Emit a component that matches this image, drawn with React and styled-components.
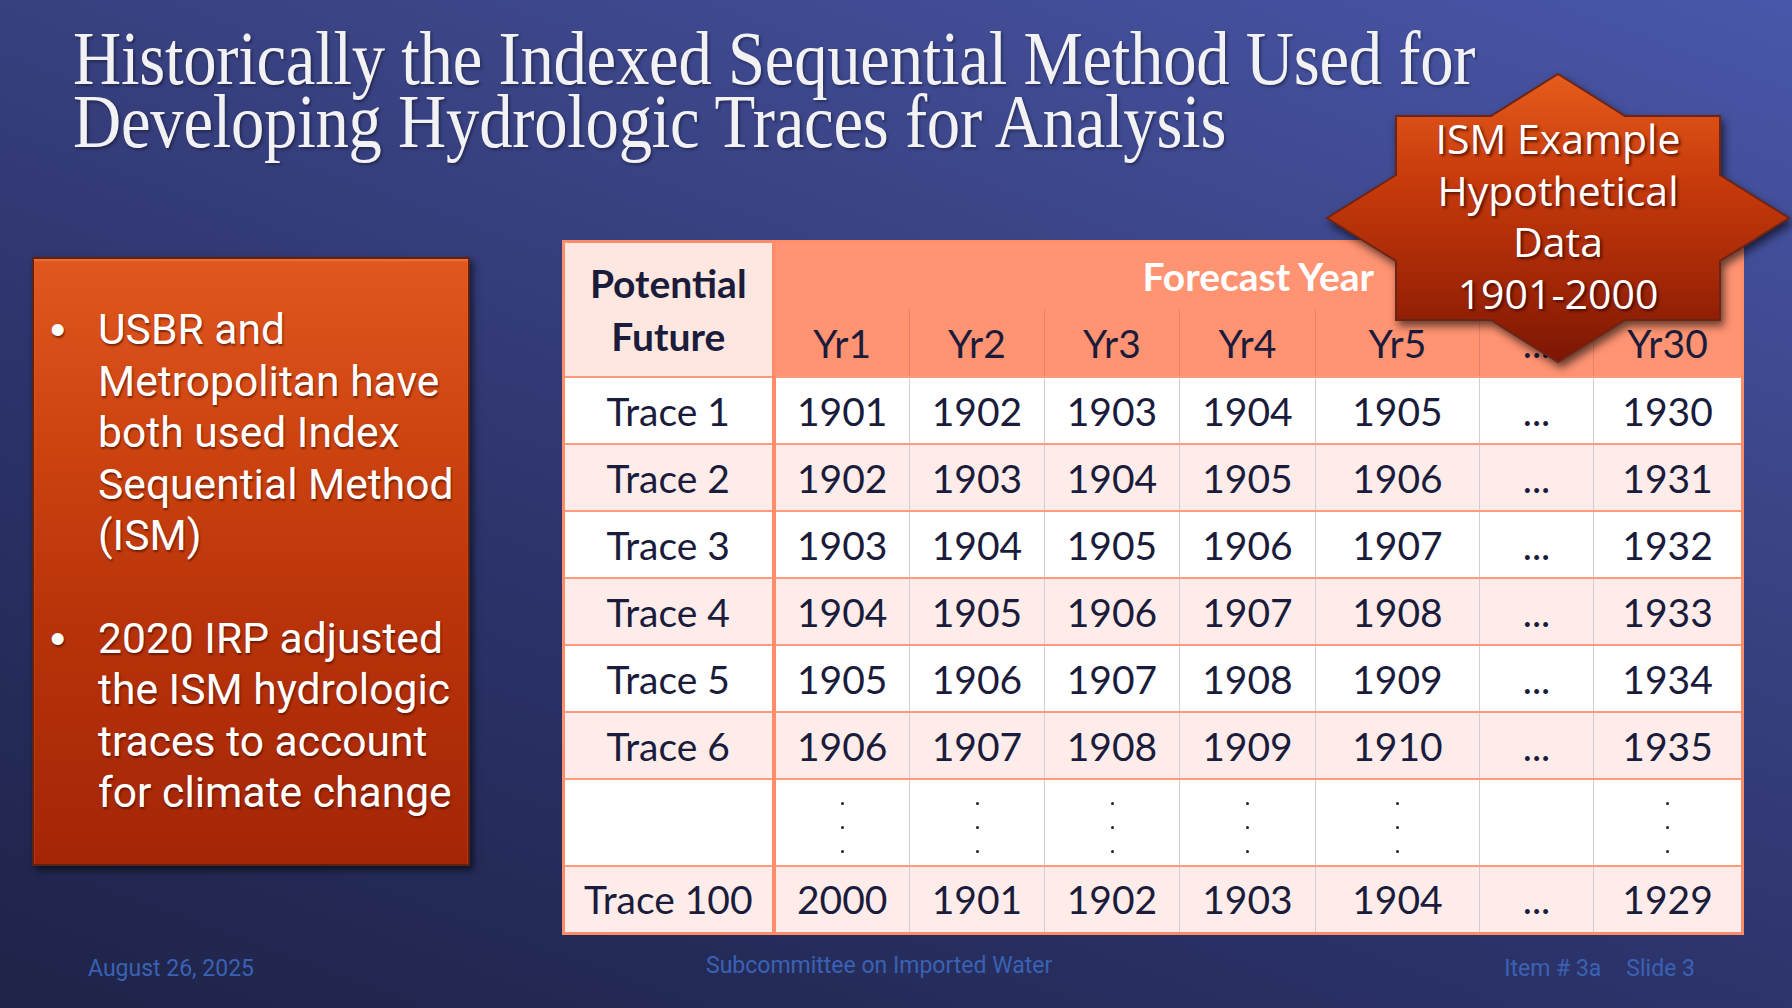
import React from "react";
import styled, { createGlobalStyle } from "styled-components";

const Global = createGlobalStyle`
  html, body { margin: 0; padding: 0; background: #1e2347; }
  #root { width: 1792px; height: 1008px; }
`;

const Slide = styled.div`
  position: relative;
  width: 1792px;
  height: 1008px;
  overflow: hidden;
  display: flex;
  flex-direction: column;
  background: linear-gradient(200deg, #4957aa 0%, #3b4486 32%, #2c336a 62%, #1e2347 100%);
`;

const Title = styled.h1`
  margin: 0;
  padding: 27px 0 0 73px;
  font-family: "Liberation Serif", "Times New Roman", serif;
  font-weight: 400;
  font-size: 76px;
  line-height: 63px;
  color: #f2f2f4;
  text-shadow: 2px 2px 3px rgba(0, 0, 0, 0.35);
`;

const TitleLine = styled.span`
  display: block;
  white-space: nowrap;
  transform: scaleX(0.878);
  transform-origin: left top;
  letter-spacing: -0.3px;
`;

const Content = styled.div`
  display: flex;
  align-items: flex-start;
  gap: 92px;
  margin-top: 87px;
  padding-left: 32px;
`;

const InfoBox = styled.div`
  box-sizing: border-box;
  width: 438px;
  height: 609px;
  margin-top: 17px;
  padding: 45px 6px 0 14px;
  border: 2px solid #5c2214;
  background: linear-gradient(180deg, #e0571f 0%, #cd4410 30%, #b8330a 60%, #a42506 100%);
  box-shadow: 3px 4px 7px rgba(0, 0, 0, 0.6), inset 0 2px 2px rgba(255, 140, 80, 0.5);
`;

const BulletItem = styled.div`
  display: flex;
  margin-top: ${(p) => (p.$first ? "0" : "51px")};
  font-family: Roboto, "Liberation Sans", sans-serif;
  font-size: 42.6px;
  line-height: 51.5px;
  color: #ffffff;
  text-shadow: 1px 2px 2px rgba(60, 10, 0, 0.6);
`;

const BulletMark = styled.span`
  flex: 0 0 50px;
  font-family: "Liberation Sans", Arial, sans-serif;
  font-size: 44px;
  padding-left: 2px;
  box-sizing: border-box;
`;

const BulletText = styled.span`
  width: 374px;
`;

const Table = styled.table`
  width: 1179px;
  border-collapse: collapse;
  table-layout: fixed;
  border: 3px solid #ff8d69;
  font-family: Lato, "Open Sans", sans-serif;
  font-size: 39px;
  color: #1b1c3b;
  text-align: center;
`;

const Row = styled.tr`
  height: ${(p) => p.$h}px;
  background: ${(p) => (p.$shade ? "#fdecea" : "#ffffff")};
`;

const CornerCell = styled.th`
  background: #fde7e0;
  font-weight: 700;
  line-height: 53px;
  border-right: 4px solid #ff8d69;
  border-bottom: 2px solid #ff9a7c;
  vertical-align: middle;
  padding: 0;
`;

const SpanCell = styled.th`
  background: #ff9372;
  color: #ffffff;
  font-weight: 700;
  height: 66px;
  padding: 0;
  border-bottom: none;
  vertical-align: middle;
`;

const YearHead = styled.th`
  background: #ff9372;
  font-weight: 400;
  height: 67px;
  padding: 0;
  border-top: none;
  border-left: 1px solid #e2826c;
  border-right: 1px solid #e2826c;
  border-bottom: 2px solid #ff9a7c;
  vertical-align: middle;
`;

const Cell = styled.td`
  padding: 0;
  border-top: 2px solid #ff9a7c;
  border-bottom: 2px solid #ff9a7c;
  border-left: 1px solid #d6ccd6;
  border-right: ${(p) => (p.$first ? "4px solid #ff8d69" : "1px solid #d6ccd6")};
  vertical-align: middle;
  white-space: nowrap;
`;

const DotStack = styled.div`
  display: flex;
  flex-direction: column;
  align-items: center;
  gap: 21px;
  padding-top: 10px;
`;

const Dot = styled.span`
  width: 3px;
  height: 3px;
  border-radius: 50%;
  background: #1b1c3b;
`;

const Footer = styled.div`
  display: flex;
  justify-content: space-between;
  align-items: flex-start;
  margin-top: 20px;
  padding: 0 97px 0 88px;
  font-family: Roboto, "Liberation Sans", sans-serif;
  font-size: 23px;
  color: #3a62b4;
`;

const FooterText = styled.span`
  display: flex;
  gap: 25px;
  margin-top: ${(p) => p.$lift || 0}px;
`;

const Star = styled.div`
  position: absolute;
  left: 1308px;
  top: 53px;
  width: 500px;
  height: 330px;
`;

const StarShape = styled.svg`
  position: absolute;
  left: 0;
  top: 0;
  overflow: visible;
  filter: drop-shadow(3px 5px 4px rgba(0, 0, 0, 0.6));
`;

const StarText = styled.div`
  position: absolute;
  inset: 0;
  display: flex;
  flex-direction: column;
  align-items: center;
  justify-content: center;
  padding-bottom: 4px;
  box-sizing: border-box;
  font-family: "Open Sans", "Noto Sans", sans-serif;
  font-size: 41px;
  line-height: 51.5px;
  color: #ffffff;
  text-shadow: 2px 2px 3px rgba(40, 0, 0, 0.7);
`;

const starPts = [
  [0, -144], [67, -102], [162, -102], [162, -43], [231, 0], [162, 43], [162, 102], [67, 102],
  [0, 144], [-67, 102], [-162, 102], [-162, 43], [-231, 0], [-162, -43], [-162, -102], [-67, -102],
]
  .map(([x, y]) => `${x + 250},${y + 165}`)
  .join(" ");

const heads = ["Yr1", "Yr2", "Yr3", "Yr4", "Yr5", "...", "Yr30"];
const colWidths = [210, 136, 135, 135, 136, 164, 114, 149];

const rows = [1, 2, 3, 4, 5, 6].map((n) => ({
  label: `Trace ${n}`,
  cells: [1900 + n, 1901 + n, 1902 + n, 1903 + n, 1904 + n, "...", 1929 + n],
}));
const lastRow = { label: "Trace 100", cells: [2000, 1901, 1902, 1903, 1904, "...", 1929] };

function Dots() {
  return (
    <DotStack>
      {[0, 1, 2].map((i) => (
        <Dot key={i} />
      ))}
    </DotStack>
  );
}

export default function App() {
  return (
    <>
      <Global />
      <Slide>
        <Title>
          <TitleLine>Historically the Indexed Sequential Method Used for</TitleLine>
          <TitleLine>Developing Hydrologic Traces for Analysis</TitleLine>
        </Title>

        <Content>
          <InfoBox>
            <BulletItem $first>
              <BulletMark>•</BulletMark>
              <BulletText>USBR and Metropolitan have both used Index Sequential Method (ISM)</BulletText>
            </BulletItem>
            <BulletItem>
              <BulletMark>•</BulletMark>
              <BulletText>2020 IRP adjusted the ISM hydrologic traces to account for climate change</BulletText>
            </BulletItem>
          </InfoBox>

          <Table>
            <colgroup>
              {colWidths.map((w, i) => (
                <col key={i} style={{ width: w }} />
              ))}
            </colgroup>
            <thead>
              <tr>
                <CornerCell rowSpan={2}>
                  Potential
                  <br />
                  Future
                </CornerCell>
                <SpanCell colSpan={7}>Forecast Year</SpanCell>
              </tr>
              <tr>
                {heads.map((h) => (
                  <YearHead key={h}>{h}</YearHead>
                ))}
              </tr>
            </thead>
            <tbody>
              {rows.map((r, i) => (
                <Row key={r.label} $h={67} $shade={i % 2 === 1}>
                  <Cell $first>{r.label}</Cell>
                  {r.cells.map((c, j) => (
                    <Cell key={j}>{c}</Cell>
                  ))}
                </Row>
              ))}
              <Row $h={87}>
                <Cell $first />
                {heads.map((h, j) => (
                  <Cell key={j}>{h === "..." ? null : <Dots />}</Cell>
                ))}
              </Row>
              <Row $h={67} $shade>
                <Cell $first>{lastRow.label}</Cell>
                {lastRow.cells.map((c, j) => (
                  <Cell key={j}>{c}</Cell>
                ))}
              </Row>
            </tbody>
          </Table>
        </Content>

        <Footer>
          <FooterText>August 26, 2025</FooterText>
          <FooterText $lift={-3}>Subcommittee on Imported Water</FooterText>
          <FooterText>
            <span>Item # 3a</span>
            <span>Slide 3</span>
          </FooterText>
        </Footer>

        <Star>
          <StarShape width="500" height="330" viewBox="0 0 500 330">
            <defs>
              <linearGradient id="starFill" x1="0" y1="0" x2="0" y2="1">
                <stop offset="0%" stopColor="#e65c1c" />
                <stop offset="35%" stopColor="#c93c0c" />
                <stop offset="70%" stopColor="#a52806" />
                <stop offset="100%" stopColor="#7c1604" />
              </linearGradient>
            </defs>
            <polygon points={starPts} fill="url(#starFill)" stroke="#6e2414" strokeWidth="2" strokeLinejoin="miter" />
          </StarShape>
          <StarText>
            <span>ISM Example</span>
            <span>Hypothetical</span>
            <span>Data</span>
            <span>1901-2000</span>
          </StarText>
        </Star>
      </Slide>
    </>
  );
}
